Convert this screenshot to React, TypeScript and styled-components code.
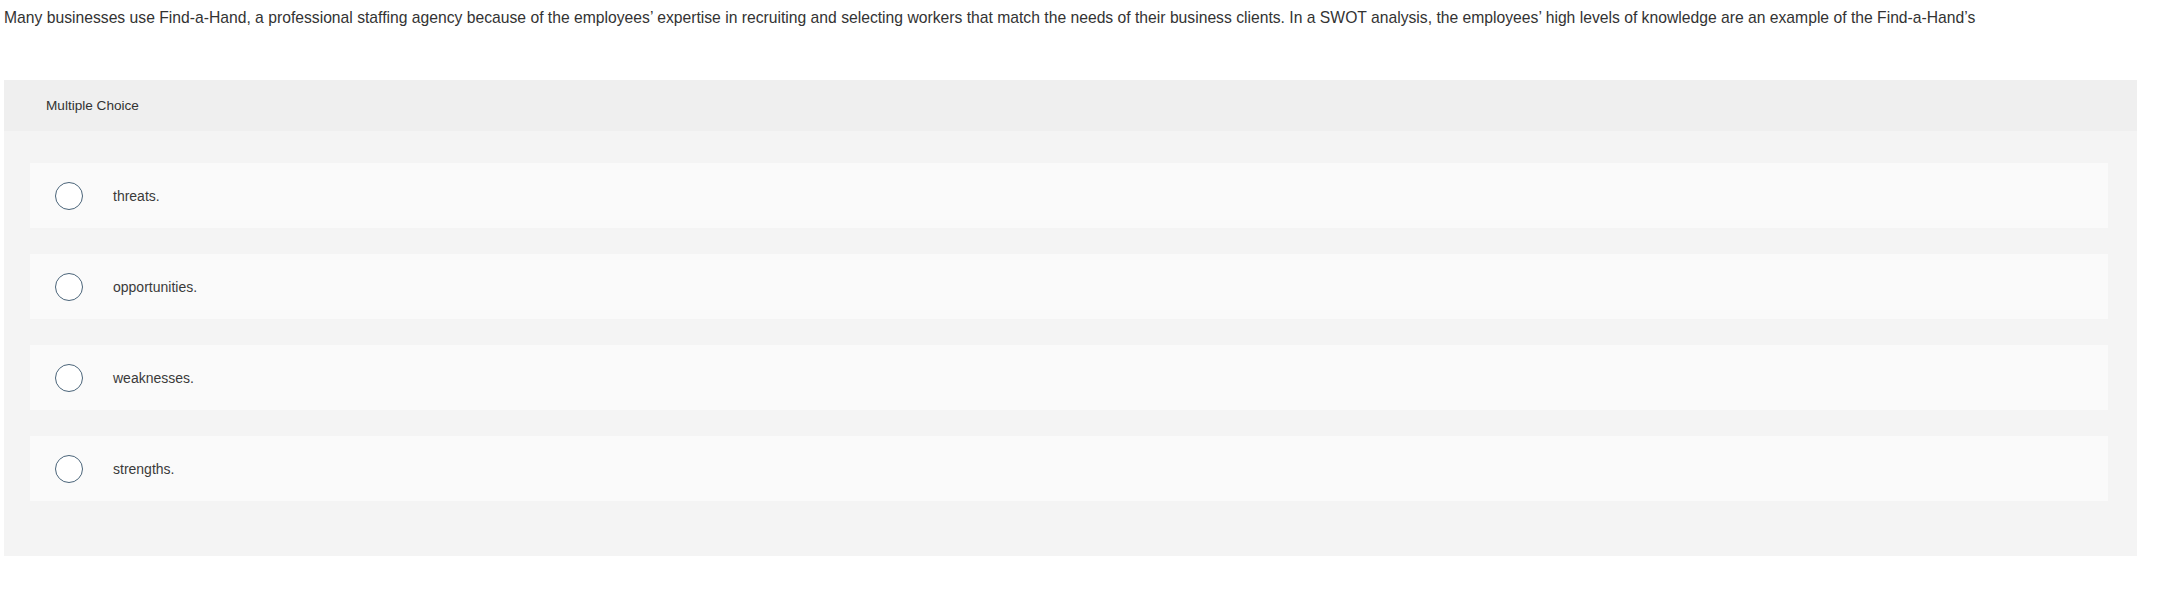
import styled, { createGlobalStyle } from "styled-components";

const GlobalStyle = createGlobalStyle`
  body {
    margin: 0;
    background: #ffffff;
    font-family: "Liberation Sans", Arial, sans-serif;
    color: #333333;
  }
`

const Page = styled.div`
  padding: 9px 25px 0 4px;
`

const Question = styled.p`
  margin: 0;
  font-size: 15.7px;
  line-height: 18px;
  color: #333333;
`

const Panel = styled.section`
  margin-top: 53px;
  background: #f4f4f4;
`

const PanelHeader = styled.div`
  height: 51px;
  display: flex;
  align-items: center;
  padding-left: 42px;
  background: #efefef;
  font-size: 13.6px;
  color: #333333;
`

const Choices = styled.div`
  display: flex;
  flex-direction: column;
  gap: 26px;
  padding: 32px 29px 55px 26px;
`

const Choice = styled.label`
  display: flex;
  align-items: center;
  height: 65px;
  padding-left: 25px;
  background: #fafafa;
  cursor: pointer;
`

const Radio = styled.span`
  box-sizing: border-box;
  flex: none;
  width: 28px;
  height: 28px;
  border: 1.5px solid #4a6479;
  border-radius: 50%;
  background: #ffffff;
`

const ChoiceText = styled.span`
  margin-left: 30px;
  font-size: 14px;
  color: #3a3a3a;
`

const choices = ["threats.", "opportunities.", "weaknesses.", "strengths."];

const App = () => {
  return (
    <>
      <GlobalStyle />
      <Page>
        <Question>
          Many businesses use Find-a-Hand, a professional staffing agency because of the employees’ expertise in recruiting and selecting workers that match the needs of their business clients. In a SWOT analysis, the employees’ high levels of knowledge are an example of the Find-a-Hand’s
        </Question>

        <Panel>
          <PanelHeader>Multiple Choice</PanelHeader>
          <Choices>
            {choices.map((c) => (
              <Choice key={c}>
                <Radio />
                <ChoiceText>{c}</ChoiceText>
              </Choice>
            ))}
          </Choices>
        </Panel>
      </Page>
    </>
  );
}

export default App;
